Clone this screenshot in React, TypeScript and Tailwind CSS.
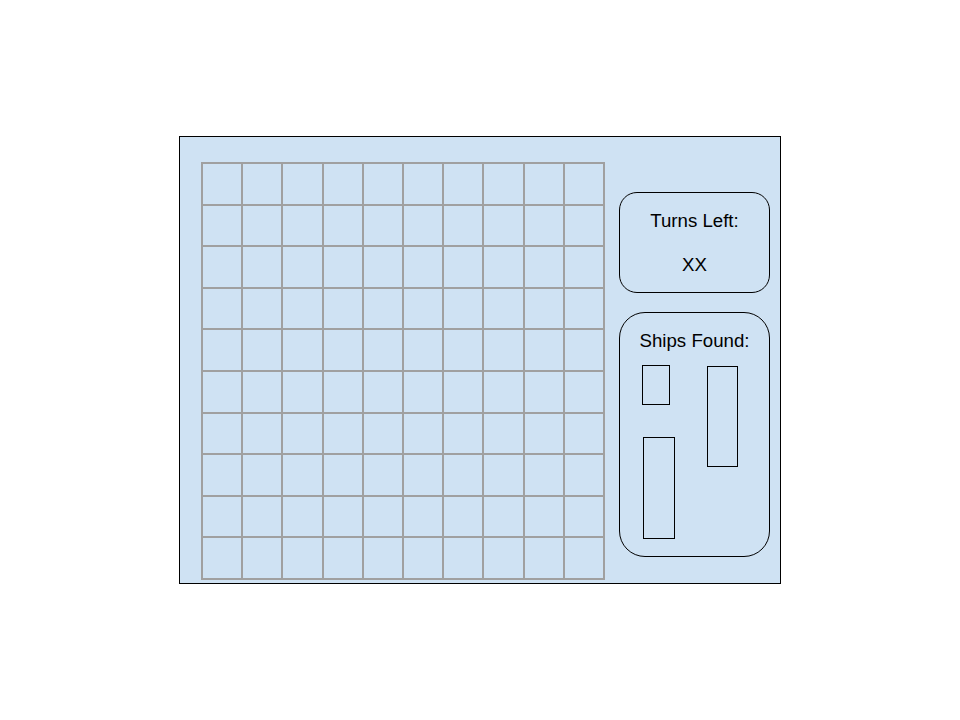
const cells = Array.from({ length: 100 }, (_, i) => i);

function TurnsCard() {
  return (
    <div className="flex h-[101px] w-[151px] flex-col items-center rounded-[18px] border border-black pt-[18px] text-[18.67px] leading-[20px] text-black">
      <p>Turns Left:</p>
      <p className="mt-[24px]">XX</p>
    </div>
  );
}

function ShipsCard() {
  return (
    <div className="flex h-[245px] w-[151px] flex-col rounded-[26px] border border-black pt-[18px] text-[18.67px] leading-[20px] text-black">
      <p className="text-center">Ships Found:</p>
      <div className="mt-[14px] flex">
        <div className="ml-[22px] flex flex-col">
          <div className="h-[40px] w-[28px] border border-black" />
          <div className="ml-[1px] mt-[32px] h-[102px] w-[32px] border border-black" />
        </div>
        <div className="ml-[32px] mt-[1px] h-[101px] w-[31px] border border-black" />
      </div>
    </div>
  );
}

export default function App() {
  return (
    <div className="flex h-screen w-full items-center justify-center bg-white font-['Liberation_Sans',Arial,sans-serif]">
      <div className="flex h-[448px] w-[602px] border border-black bg-[#cfe2f3] pl-[21px] pt-[25px]">
        <div className="grid h-[418px] w-[404px] grid-cols-10 grid-rows-10 gap-[2px] bg-[#a0a0a0] p-[2px]">
          {cells.map((i) => (
            <div key={i} className="bg-[#cfe2f3]" />
          ))}
        </div>
        <div className="ml-[14px] mt-[30px] flex flex-col gap-[19px]">
          <TurnsCard />
          <ShipsCard />
        </div>
      </div>
    </div>
  );
}
